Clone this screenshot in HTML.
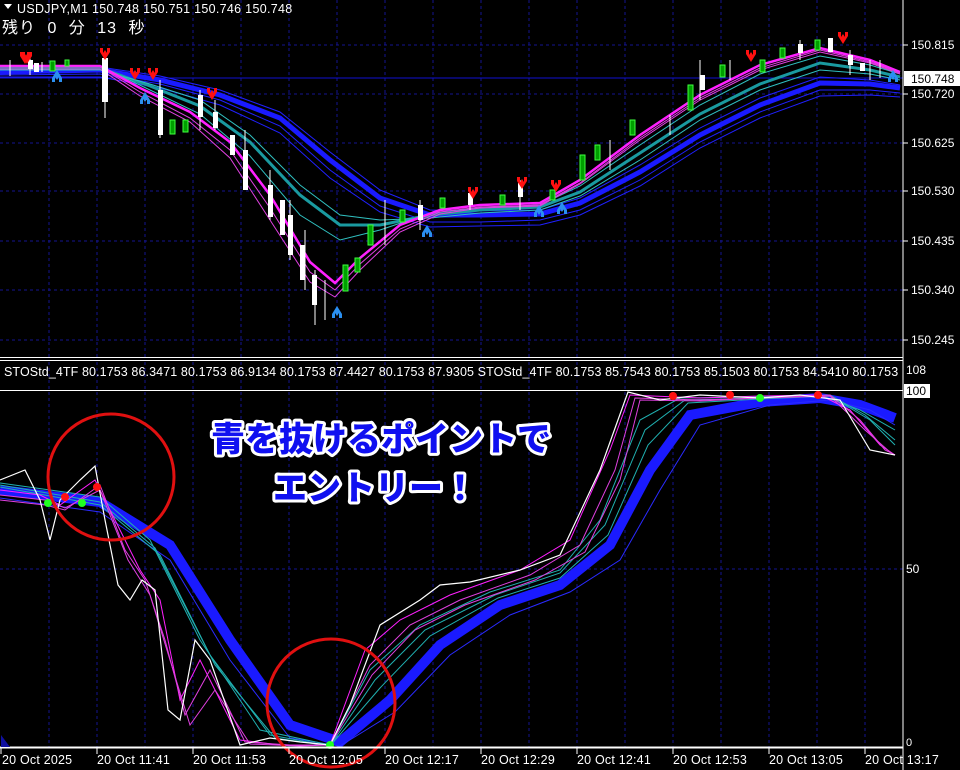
<!DOCTYPE html>
<html><head><meta charset="utf-8"><style>
html,body{margin:0;padding:0;background:#000;width:960px;height:770px;overflow:hidden}
svg{display:block}
text{font-family:"Liberation Sans","Noto Sans CJK JP",sans-serif}
</style></head><body>
<svg width="960" height="770" viewBox="0 0 960 770" xmlns="http://www.w3.org/2000/svg">
<rect width="960" height="770" fill="#000"/>
<g stroke="#141490" stroke-dasharray="3,3" stroke-width="1">
<line x1="0" y1="45" x2="903" y2="45"/><line x1="0" y1="94" x2="903" y2="94"/><line x1="0" y1="143" x2="903" y2="143"/><line x1="0" y1="191" x2="903" y2="191"/><line x1="0" y1="241" x2="903" y2="241"/><line x1="0" y1="290" x2="903" y2="290"/><line x1="0" y1="340" x2="903" y2="340"/>
<line x1="0" y1="569" x2="903" y2="569"/>
<path d="M49 0V357M97 0V357M145 0V357M193 0V357M241 0V357M289 0V357M337 0V357M385 0V357M433 0V357M481 0V357M529 0V357M577 0V357M625 0V357M673 0V357M721 0V357M769 0V357M817 0V357M865 0V357"/>
<path d="M49 362V747M97 362V747M145 362V747M193 362V747M241 362V747M289 362V747M337 362V747M385 362V747M433 362V747M481 362V747M529 362V747M577 362V747M625 362V747M673 362V747M721 362V747M769 362V747M817 362V747M865 362V747"/>
</g>
<line x1="0" y1="78" x2="903" y2="78" stroke="#1010d0"/>
<g fill="none" stroke-width="1">
<path stroke="#1a1aff" stroke-width="5" d="M0 72 L100 70 L160 80 L220 95 L280 118 L330 160 L380 198 L430 215 L480 215 L540 214 L580 203 L640 172 L700 135 L760 105 L820 83 L870 84 L900 88"/>
<path stroke="#2020ff" d="M0 75 L100 74 L160 84 L220 100 L280 126 L330 170 L380 206 L430 222 L480 222 L540 220 L580 210 L640 180 L700 142 L760 112 L820 90 L870 90 L900 93"/>
<path stroke="#2020ff" d="M0 77 L100 77 L160 88 L220 105 L280 133 L330 178 L380 212 L430 227 L480 226 L540 225 L580 215 L640 186 L700 148 L760 118 L820 96 L870 95 L900 97"/>
<path stroke="#2020ff" d="M0 69 L100 67 L160 76 L220 90 L280 112 L330 152 L380 190 L430 210 L480 211 L540 210 L580 198 L640 165 L700 128 L760 98 L820 77 L870 80 L900 85"/>
<path stroke="#1a9aa0" stroke-width="3" d="M0 68 L100 68 L150 86 L200 106 L250 142 L300 195 L340 225 L380 225 L430 215 L480 210 L540 207 L580 192 L640 153 L700 114 L760 84 L820 63 L870 70 L900 77"/>
<path stroke="#30c0c0" d="M0 66 L100 66 L150 90 L200 114 L250 156 L300 215 L340 240 L380 230 L430 213 L480 208 L540 205 L580 186 L640 145 L700 105 L760 74 L820 56 L870 65 L900 74"/>
<path stroke="#30c0c0" d="M0 70 L100 70 L150 84 L200 100 L250 135 L300 185 L340 215 L380 220 L430 218 L480 213 L540 210 L580 196 L640 160 L700 120 L760 90 L820 70 L870 74 L900 80"/>
<path stroke="#ff20ff" stroke-width="2.5" d="M0 66 L100 66 L140 88 L190 112 L230 142 L270 195 L310 262 L335 283 L360 258 L400 225 L440 210 L480 205 L540 203 L580 180 L640 135 L700 95 L760 65 L820 48 L870 60 L900 72"/>
<path stroke="#e040e0" d="M0 69 L100 69 L140 96 L190 122 L230 158 L270 220 L310 282 L335 297 L360 270 L400 232 L440 214 L480 208 L540 206 L580 184 L640 140 L700 100 L760 70 L820 52 L870 63 L900 74"/>
<path stroke="#e040e0" d="M0 67 L100 67 L140 92 L190 118 L230 150 L270 208 L310 272 L335 290 L360 264 L400 229 L440 212 L480 207 L540 205 L580 183 L640 138 L700 98 L760 68 L820 50 L870 62 L900 73"/>
</g>
<g stroke="#fff" stroke-width="1">
<path d="M10 60V76M30 55V75M42 62V72M105 55V118M160 80V138M200 90V130M215 100V130M245 130V190M270 170V220M290 200V260M305 230V290M315 270V325M325 280V320M385 200V245M420 200V230M470 190V210M520 180V210M610 140V170M670 115V135M700 60V100M730 60V80M800 40V60M850 50V75M870 60V80M880 60V78"/>
</g>
<g fill="#fff">
<rect x="28" y="60" width="5" height="9"/><rect x="34" y="63" width="5" height="9"/><rect x="102" y="58" width="6" height="44"/><rect x="158" y="90" width="5" height="45"/><rect x="198" y="95" width="5" height="22"/><rect x="213" y="112" width="5" height="16"/><rect x="230" y="135" width="5" height="20"/><rect x="243" y="150" width="5" height="40"/><rect x="268" y="185" width="5" height="32"/><rect x="280" y="200" width="5" height="35"/><rect x="288" y="215" width="5" height="40"/><rect x="300" y="245" width="5" height="35"/><rect x="312" y="275" width="5" height="30"/><rect x="418" y="205" width="5" height="15"/><rect x="468" y="193" width="5" height="12"/><rect x="518" y="183" width="5" height="14"/><rect x="700" y="75" width="5" height="15"/><rect x="798" y="44" width="5" height="9"/><rect x="828" y="38" width="5" height="14"/><rect x="848" y="55" width="5" height="10"/><rect x="860" y="63" width="5" height="8"/></g>
<g fill="#00a000" stroke="#40ff40">
<rect x="50" y="61" width="5" height="10"/><rect x="65" y="60" width="4" height="6"/><rect x="170" y="120" width="5" height="14"/><rect x="183" y="120" width="5" height="12"/><rect x="343" y="265" width="5" height="26"/><rect x="355" y="258" width="5" height="14"/><rect x="368" y="225" width="5" height="20"/><rect x="400" y="210" width="5" height="12"/><rect x="440" y="198" width="5" height="10"/><rect x="500" y="195" width="5" height="10"/><rect x="550" y="190" width="5" height="10"/><rect x="580" y="155" width="5" height="25"/><rect x="595" y="145" width="5" height="15"/><rect x="630" y="120" width="5" height="15"/><rect x="688" y="85" width="5" height="25"/><rect x="720" y="65" width="5" height="12"/><rect x="760" y="60" width="5" height="12"/><rect x="780" y="48" width="5" height="10"/><rect x="815" y="40" width="5" height="10"/></g>
<g fill="#ff1010">
<path id="d" d="M0 0l3 0l0 5l2-3l2 3l0-5l3 0l0 4l-5 8l-5-8z" transform="translate(22 52)"/>
<use href="#d" x="78" y="-4"/><use href="#d" x="108" y="16"/><use href="#d" x="126" y="16"/><use href="#d" x="185" y="36"/><use href="#d" x="446" y="135"/><use href="#d" x="495" y="125"/><use href="#d" x="529" y="128"/><use href="#d" x="724" y="-2"/><use href="#d" x="816" y="-20"/><use href="#d" x="-2" y="0"/></g>
<g fill="#2a8ff0">
<path id="u" d="M5 0l5 8l0 4l-3 0l0-5l-2 3l-2-3l0 5l-3 0l0-4z" transform="translate(52 70)"/>
<use href="#u" x="88" y="22"/><use href="#u" x="280" y="236"/><use href="#u" x="370" y="155"/><use href="#u" x="482" y="135"/><use href="#u" x="505" y="132"/><use href="#u" x="836" y="0"/></g>
<path d="M4 4h8l-4 5z" fill="#fff"/>
<text x="17" y="13" fill="#fff" font-size="12.5" letter-spacing="0.3">USDJPY,M1  150.748 150.751 150.746 150.748</text>
<text x="2" y="33" fill="#fff" font-size="16" letter-spacing="1" word-spacing="6">残り 0 分 13 秒</text>
<line x1="903" y1="0" x2="903" y2="770" stroke="#fff"/>
<g fill="#fff" font-size="12"><text x="911" y="49">150.815</text><text x="911" y="98">150.720</text><text x="911" y="147">150.625</text><text x="911" y="195">150.530</text><text x="911" y="245">150.435</text><text x="911" y="294">150.340</text><text x="911" y="344">150.245</text></g>
<rect x="904" y="71" width="56" height="15" fill="#fff"/><text x="911" y="83" fill="#000" font-size="12">150.748</text>
<g stroke="#fff"><line x1="903" y1="45" x2="908" y2="45"/><line x1="903" y1="94" x2="908" y2="94"/><line x1="903" y1="143" x2="908" y2="143"/><line x1="903" y1="191" x2="908" y2="191"/><line x1="903" y1="241" x2="908" y2="241"/><line x1="903" y1="290" x2="908" y2="290"/><line x1="903" y1="340" x2="908" y2="340"/></g>
<line x1="0" y1="357.5" x2="903" y2="357.5" stroke="#fff"/>
<line x1="0" y1="360.5" x2="903" y2="360.5" stroke="#fff"/>
<svg x="0" y="362" width="903" height="20"><text x="4" y="14" fill="#fff" font-size="12.5" letter-spacing="0.1">STOStd_4TF 80.1753 86.3471 80.1753 86.9134 80.1753 87.4427 80.1753 87.9305  STOStd_4TF 80.1753 85.7543 80.1753 85.1503 80.1753 84.5410 80.1753</text></svg>
<text x="906" y="374" fill="#fff" font-size="12">108</text>
<rect x="904" y="384" width="26" height="14" fill="#fff"/><text x="906" y="395" fill="#000" font-size="12">100</text>
<text x="906" y="573" fill="#fff" font-size="12">50</text>
<line x1="0" y1="390.5" x2="903" y2="390.5" stroke="#fff"/>
<g fill="none" stroke-width="1">
<path stroke="#1a1aff" stroke-width="10" d="M0 490 L100 502 L170 545 L230 640 L290 725 L340 742 L390 700 L440 645 L500 605 L560 585 L610 545 L650 470 L690 415 L760 402 L820 398 L860 405 L895 418"/>
<path stroke="#2a2aff" d="M0 498 L100 512 L170 560 L230 660 L290 738 L340 746 L395 712 L450 655 L510 615 L570 592 L620 560 L660 490 L700 425 L770 405 L830 400 L870 410 L895 425"/>
<path stroke="#20b0b0" d="M0 483 L100 497 L150 540 L200 640 L260 730 L330 745 L370 670 L420 625 L490 592 L560 570 L600 520 L640 420 L680 398 L760 397 L820 395 L860 410 L895 430"/>
<path stroke="#20b0b0" d="M0 485 L100 502 L155 548 L210 655 L270 735 L330 746 L375 680 L425 630 L495 595 L560 573 L605 525 L645 430 L685 400 L760 398 L830 395 L865 415 L895 440"/>
<path stroke="#20b0b0" d="M0 487 L100 505 L160 555 L215 665 L275 738 L330 746 L380 688 L430 636 L498 598 L560 578 L608 535 L648 445 L688 403 L760 399 L830 396 L870 420 L895 445"/>
<path stroke="#ff20ff" d="M0 490 L40 495 L60 505 L95 480 L120 530 L140 570 L160 600 L180 700 L200 660 L240 740 L280 745 L330 745 L365 650 L400 620 L450 595 L520 570 L570 540 L610 450 L630 395 L700 398 L760 396 L820 395 L850 410 L880 445 L895 455"/>
<path stroke="#e040e0" d="M0 500 L45 505 L65 510 L100 485 L125 550 L145 580 L165 640 L185 715 L210 670 L245 742 L290 745 L330 745 L370 665 L410 625 L460 600 L530 575 L580 545 L615 470 L635 398 L700 400 L760 398 L830 395 L860 420 L885 450 L895 455"/>
<path stroke="#e040e0" d="M0 495 L45 500 L65 508 L100 490 L128 560 L150 595 L170 660 L190 725 L215 690 L250 744 L300 746 L330 745 L372 675 L415 630 L465 605 L535 580 L585 552 L620 480 L640 400 L700 401 L760 398 L830 396 L865 430 L890 452 L895 455"/>
<path stroke="#fff" stroke-width="1.2" d="M0 480 L25 470 L40 500 L50 540 L60 500 L80 480 L95 466 L105 520 L118 585 L130 600 L142 580 L155 590 L168 710 L180 720 L195 640 L210 660 L240 745 L270 738 L300 742 L330 745 L350 705 L380 625 L420 600 L440 585 L470 582 L520 570 L560 555 L600 470 L628 392 L660 400 L700 395 L760 398 L800 395 L840 400 L870 450 L895 455"/>
</g>
<g><circle cx="65" cy="497" r="4" fill="#ff1010"/><circle cx="48" cy="503" r="4" fill="#20ff20"/><circle cx="82" cy="503" r="4" fill="#20ff20"/><circle cx="97" cy="487" r="4" fill="#ff1010"/><circle cx="330" cy="745" r="4" fill="#20ff20"/><circle cx="673" cy="396" r="4" fill="#ff1010"/><circle cx="730" cy="395" r="4" fill="#ff1010"/><circle cx="760" cy="398" r="4" fill="#20ff20"/><circle cx="818" cy="395" r="4" fill="#ff1010"/></g>
<circle cx="111" cy="477" r="63" fill="none" stroke="#e01010" stroke-width="3"/>
<circle cx="331" cy="703" r="64" fill="none" stroke="#e01010" stroke-width="3"/>
<g font-weight="900" font-size="34" text-anchor="middle" fill="#1010f0" stroke="#fff" stroke-width="6" paint-order="stroke" stroke-linejoin="round">
<text x="381" y="451">青を抜けるポイントで</text>
<text x="375" y="500">エントリー！</text>
</g>
<line x1="0" y1="747.5" x2="903" y2="747.5" stroke="#fff" stroke-width="2"/>
<path d="M1 735V747H10z" fill="#1010a0"/>
<g stroke="#fff"><path d="M1 748v6M97 748v6M193 748v6M289 748v6M385 748v6M481 748v6M577 748v6M673 748v6M769 748v6M865 748v6"/></g>
<g fill="#fff" font-size="12.5" letter-spacing="0.2"><text x="2" y="764">20 Oct 2025</text><text x="97" y="764">20 Oct 11:41</text><text x="193" y="764">20 Oct 11:53</text><text x="289" y="764">20 Oct 12:05</text><text x="385" y="764">20 Oct 12:17</text><text x="481" y="764">20 Oct 12:29</text><text x="577" y="764">20 Oct 12:41</text><text x="673" y="764">20 Oct 12:53</text><text x="769" y="764">20 Oct 13:05</text><text x="865" y="764">20 Oct 13:17</text></g>
<text x="906" y="746" fill="#fff" font-size="11">0</text>
</svg>
</body></html>
